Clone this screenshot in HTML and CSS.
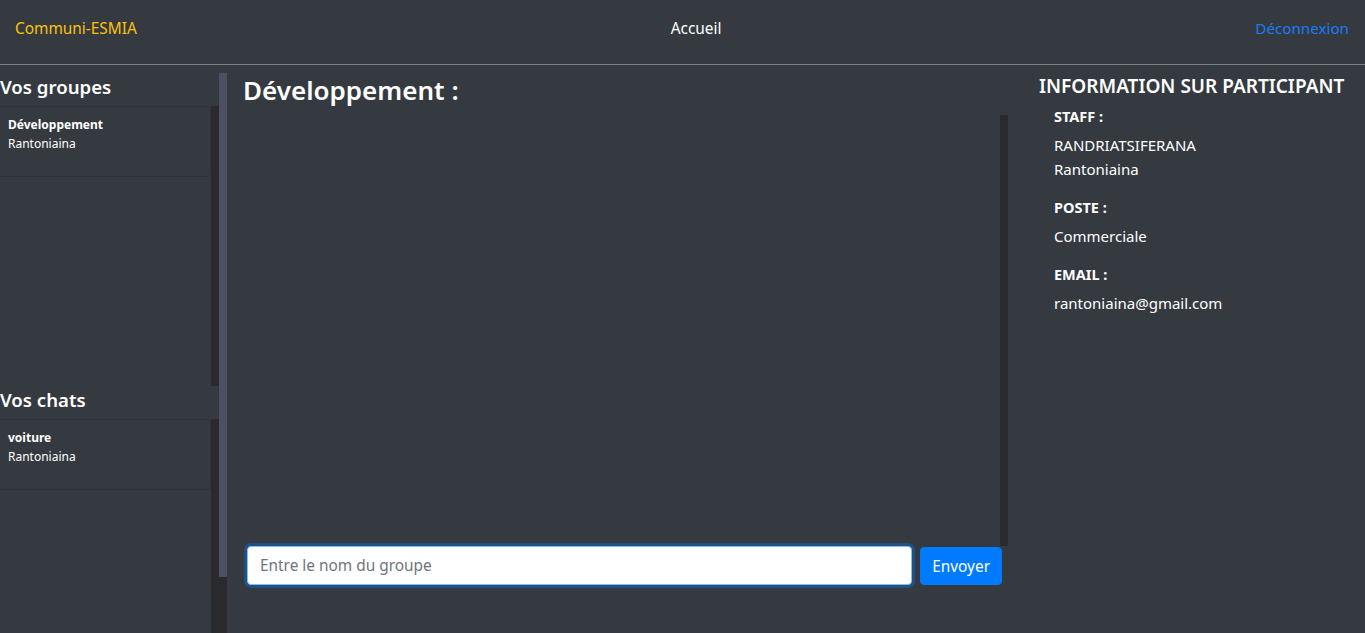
FILE: index.html
```html
<!DOCTYPE html>
<html lang="fr">
<head>
<meta charset="utf-8">
<title>Communi-ESMIA</title>
<link rel="stylesheet" href="styles.css">
</head>
<body>
<nav class="navbar">
  <a class="brand">Communi-ESMIA</a>
  <a class="nav-link">Accueil</a>
  <a class="logout">Déconnexion</a>
</nav>
<main class="row">
  <aside class="col-left">
    <div class="side-scroll">
      <h4 class="side-title">Vos groupes</h4>
      <div class="side-list">
        <div class="card">
          <div class="card-title">Développement</div>
          <div class="card-sub">Rantoniaina</div>
        </div>
      </div>
      <h4 class="side-title">Vos chats</h4>
      <div class="side-list">
        <div class="card">
          <div class="card-title">voiture</div>
          <div class="card-sub">Rantoniaina</div>
        </div>
      </div>
    </div>
  </aside>
  <section class="col-mid">
    <h2 class="chat-title">Développement :</h2>
    <div class="messages"></div>
    <form class="send-row">
      <input class="msg-input" type="text" placeholder="Entre le nom du groupe" autofocus>
      <button class="btn-send" type="button">Envoyer</button>
    </form>
  </section>
  <section class="col-right">
    <h5 class="info-title">INFORMATION SUR PARTICIPANT</h5>
    <div class="info-body">
      <div class="info-label">STAFF :</div>
      <div class="info-value">RANDRIATSIFERANA<br>Rantoniaina</div>
      <div class="info-label">POSTE :</div>
      <div class="info-value">Commerciale</div>
      <div class="info-label">EMAIL :</div>
      <div class="info-value">rantoniaina@gmail.com</div>
    </div>
  </section>
</main>
</body>
</html>
```

FILE: styles.css
```css
* { box-sizing: border-box; }
html, body {
  margin: 0;
  height: 100%;
  overflow: hidden;
  background: #343a40;
  color: #fff;
  font-family: "Noto Sans", "Open Sans", sans-serif;
  font-size: 16px;
}
.navbar {
  height: 65px;
  display: flex;
  align-items: center;
  justify-content: space-between;
  padding: 0 16px 8px 15px;
  border-bottom: 1px solid #7b8188;
}
.brand { color: #ffc107; font-size: 15.4px; }
.nav-link { color: #fff; font-size: 15.4px; }
.logout { color: #1a7cf5; font-size: 15.2px; }

.row {
  display: flex;
  height: calc(100% - 65px);
  padding-top: 8px;
}
.col-left {
  width: 227px;
  flex: none;
  height: 100%;
  padding-right: 8px;
  background: linear-gradient(to bottom, #4b5163 90%, #29292e 90%) no-repeat right top / 8px 100%;
}
.side-scroll {
  height: 100%;
  overflow: hidden;
}
.side-title {
  margin: 0;
  height: 33px;
  font-size: 18.6px;
  font-weight: 600;
  line-height: 28px;
}
.side-list {
  height: 280px;
  border-right: 8px solid #29292e;
  overflow: hidden;
}
.card {
  height: 71px;
  border: 1px solid #2d3238;
  border-radius: 4px;
  margin-left: -4px;
  padding: 8px 11px;
  font-size: 12px;
  line-height: 19px;
}
.card-title { font-weight: 700; }

.col-mid {
  width: 797px;
  flex: none;
  padding: 0 16px;
  display: flex;
  flex-direction: column;
  height: 100%;
}
.chat-title {
  margin: 0;
  font-size: 26px;
  font-weight: 600;
  line-height: 34px;
  height: 42px;
}
.messages {
  height: 431px;
  border-right: 8px solid #29292e;
}
.send-row {
  display: flex;
  gap: 8px;
  padding: 0 6px 0 4px;
  margin: 0;
}
.msg-input {
  flex: 1;
  height: 39px;
  border: 1px solid #80bdff;
  border-radius: 4px;
  box-shadow: 0 0 0 3px rgba(0, 123, 255, 0.35);
  outline: none;
  padding: 4px 12px;
  font-family: inherit;
  font-size: 15.4px;
  color: #495057;
}
.msg-input::placeholder { color: #6c757d; }
.btn-send {
  height: 38px;
  margin-top: 1px;
  background: #007bff;
  color: #fff;
  border: 1px solid #007bff;
  border-radius: 4px;
  padding: 0 11px;
  font-family: inherit;
  font-size: 15.4px;
}

.col-right {
  flex: 1;
  padding: 0 15px;
}
.info-title {
  margin: 0;
  font-size: 19px;
  font-weight: 600;
  line-height: 26px;
}
.info-body { padding-left: 15px; }
.info-label {
  font-weight: 700;
  font-size: 14.5px;
  margin-top: 15px;
  line-height: 22px;
}
.info-label:first-child { margin-top: 6px; }
.info-value {
  font-size: 15px;
  line-height: 24px;
  margin-top: 6px;
}
```
